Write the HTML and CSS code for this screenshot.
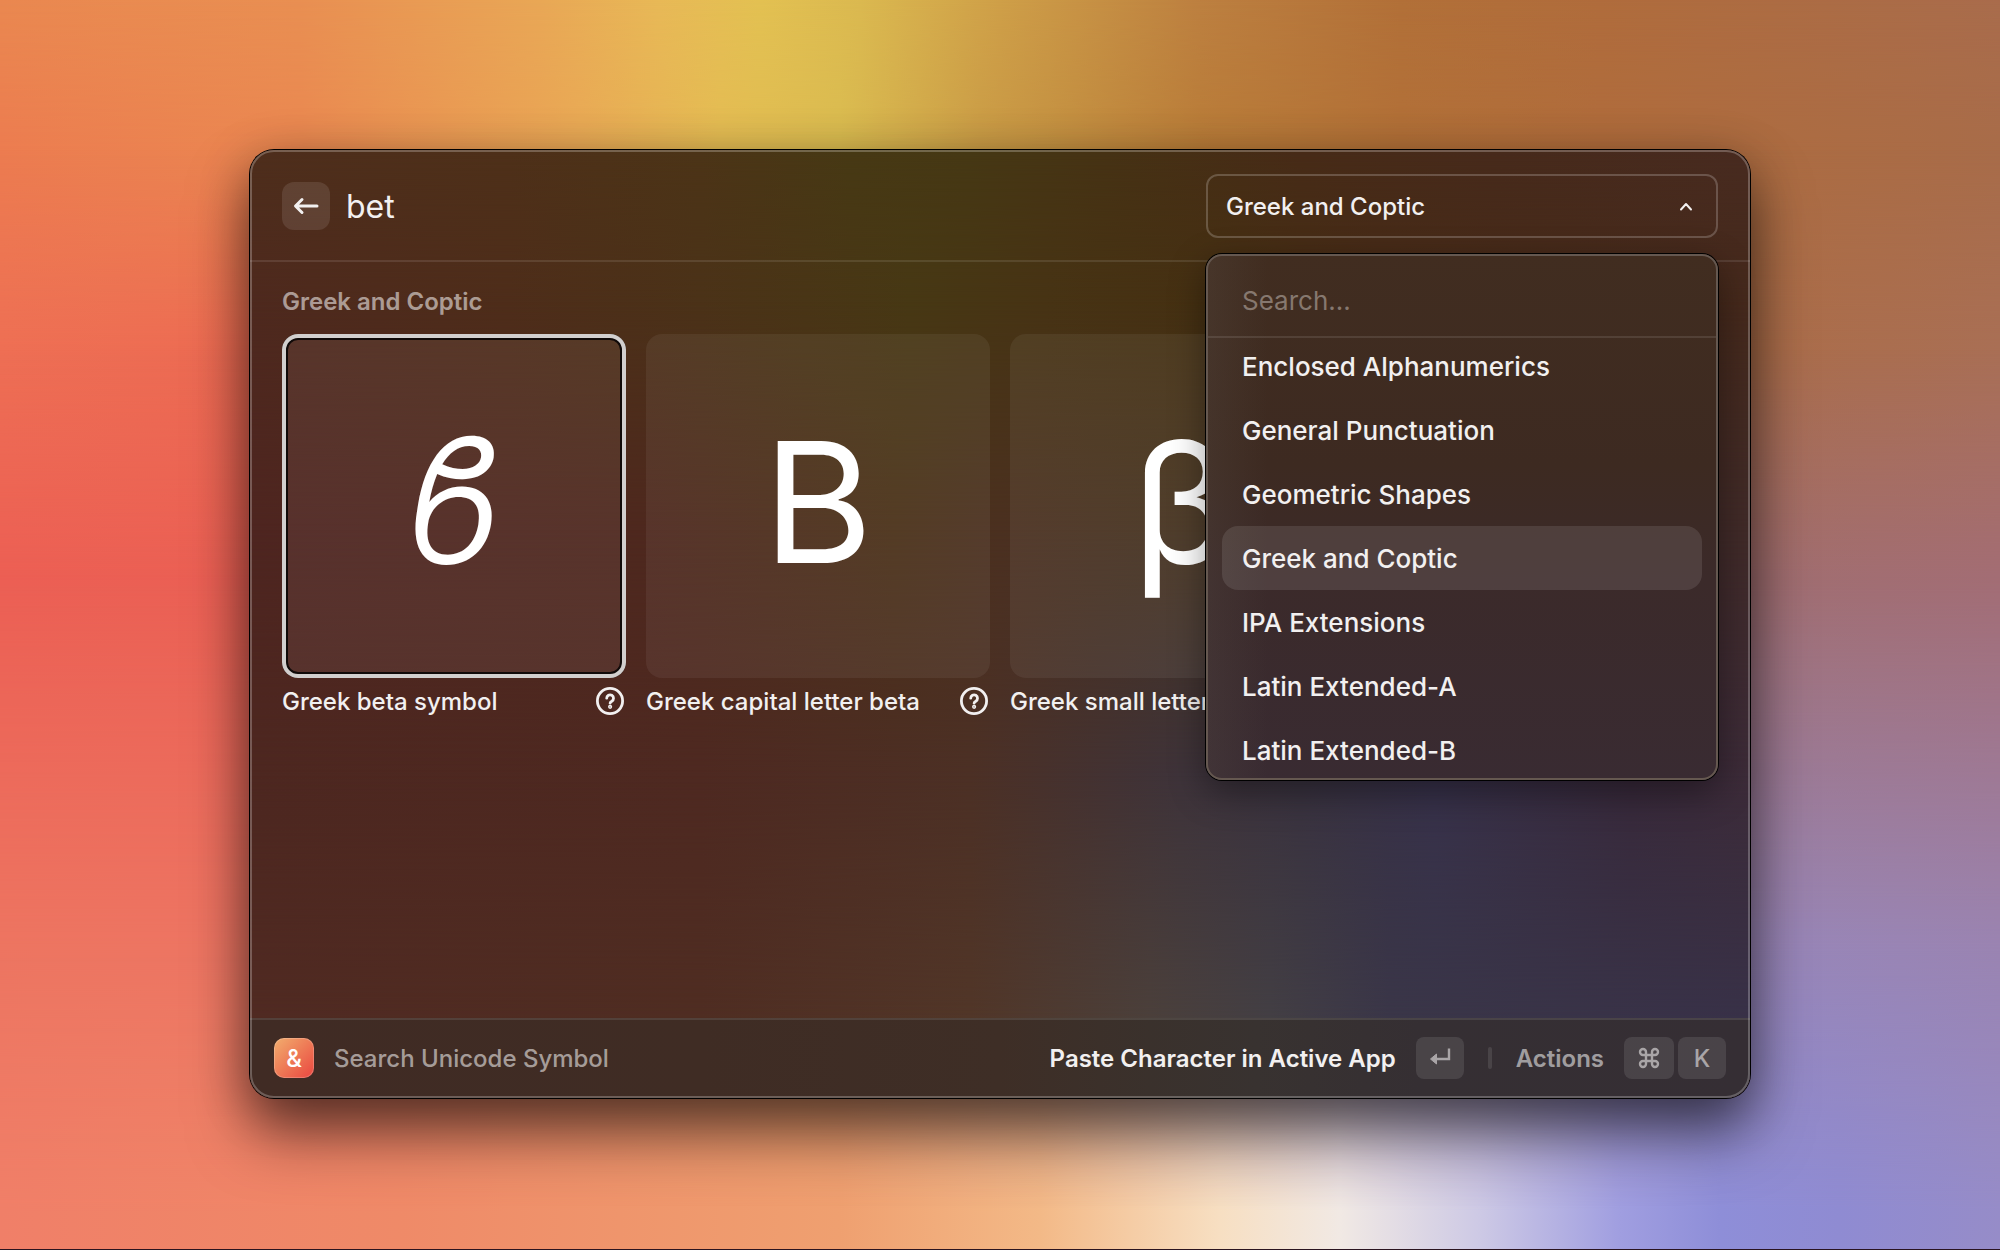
FILE: index.html
```html
<!DOCTYPE html>
<html lang="en">
<head>
<meta charset="utf-8">
<title>Search Unicode Symbol</title>
<link rel="stylesheet" href="styles.css">
</head>
<body>
<div class="mesh wallpaper" aria-hidden="true"><i class="w1"></i><i class="w2"></i><i class="w3"></i><i class="w4"></i><i class="w5"></i><i class="w6"></i></div>
<main class="window">
  <div class="mesh glass" aria-hidden="true"><i class="g1"></i><i class="g2"></i><i class="g3"></i><i class="g4"></i><i class="g5"></i></div>
  <header class="header">
    <button class="back" type="button" aria-label="Back">
      <svg width="28" height="28" viewBox="0 0 28 28" fill="none" stroke="currentColor" stroke-width="3" stroke-linecap="round" stroke-linejoin="round"><path d="M25 14H4M10 7.500 3.500 14l6.500 6.500"/></svg>
    </button>
    <input class="query" type="text" aria-label="Search symbols" value="bet">
    <div class="picker">
      <select class="picker-select" aria-label="Unicode block">
        <option>Enclosed Alphanumerics</option>
        <option>General Punctuation</option>
        <option>Geometric Shapes</option>
        <option selected>Greek and Coptic</option>
        <option>IPA Extensions</option>
        <option>Latin Extended-A</option>
        <option>Latin Extended-B</option>
      </select>
      <svg class="chevron" width="16" height="16" viewBox="0 0 16 16" fill="none" stroke="currentColor" stroke-width="2" stroke-linecap="round" stroke-linejoin="round"><path d="M3 11.500 8 6l5 5.500"/></svg>
      <div class="popup">
        <input class="popup-search" type="text" aria-label="Search blocks" placeholder="Search...">
        <div class="popup-list">
          <button class="item" type="button">Enclosed Alphanumerics</button>
          <button class="item" type="button">General Punctuation</button>
          <button class="item" type="button">Geometric Shapes</button>
          <button class="item selected" type="button">Greek and Coptic</button>
          <button class="item" type="button">IPA Extensions</button>
          <button class="item" type="button">Latin Extended-A</button>
          <button class="item" type="button">Latin Extended-B</button>
        </div>
      </div>
    </div>
  </header>
  <section class="content">
    <h2 class="section-title">Greek and Coptic</h2>
    <div class="grid">
      <article class="card">
        <div class="tile active">ϐ</div>
        <div class="caption"><span>Greek beta symbol</span>
          <svg class="help" viewBox="0 0 32 32" fill="none" stroke="currentColor" stroke-width="2.800" stroke-linecap="round" stroke-linejoin="round"><circle cx="16" cy="16" r="12.600"/><path d="M12.700 13.200a3.400 3.400 0 1 1 5.100 3c-1.200.7-1.700 1.100-1.700 2"/><circle cx="16.100" cy="21.800" r=".7" fill="currentColor"/></svg>
        </div>
      </article>
      <article class="card">
        <div class="tile">Β</div>
        <div class="caption"><span>Greek capital letter beta</span>
          <svg class="help" viewBox="0 0 32 32" fill="none" stroke="currentColor" stroke-width="2.800" stroke-linecap="round" stroke-linejoin="round"><circle cx="16" cy="16" r="12.600"/><path d="M12.700 13.200a3.400 3.400 0 1 1 5.100 3c-1.200.7-1.700 1.100-1.700 2"/><circle cx="16.100" cy="21.800" r=".7" fill="currentColor"/></svg>
        </div>
      </article>
      <article class="card">
        <div class="tile">β</div>
        <div class="caption"><span>Greek small letter beta</span></div>
      </article>
    </div>
  </section>
  <footer class="footer">
    <span class="app-icon">&amp;</span>
    <span class="app-name">Search Unicode Symbol</span>
    <button class="action primary" type="button">Paste Character in Active App
      <kbd class="key"><svg width="24" height="24" viewBox="0 0 24 24" fill="none" stroke="currentColor" stroke-width="2.400"><path d="M21 2.500V13H6"/><path d="M8.500 8 2.500 13l6 5z" fill="currentColor" stroke-width="1" stroke-linejoin="round"/></svg></kbd>
    </button>
    <span class="divider"></span>
    <button class="action" type="button">Actions
      <span class="keys">
        <kbd class="key command"><svg width="24" height="24" viewBox="0 0 24 24" fill="none" stroke="currentColor" stroke-width="2.400"><path d="M15 6v12a3 3 0 1 0 3-3H6a3 3 0 1 0 3 3V6a3 3 0 1 0-3 3h12a3 3 0 1 0-3-3"/></svg></kbd>
        <kbd class="key">K</kbd>
      </span>
    </button>
  </footer>
</main>
</body>
</html>
```
FILE: styles.css
```css
* { box-sizing: border-box; }

body {
  margin: 0;
  min-height: 100vh;
  padding: 150px 12.5vw 152px;
  display: flex;
  position: relative;
  font-family: Inter, "Noto Sans", sans-serif;
  font-size: 24px;
  font-weight: 500;
  color: #f2f0f0;
}

button, input, select {
  font: inherit;
  color: inherit;
  background: none;
  border: 0;
  padding: 0;
  margin: 0;
  outline: 0;
}

/* Colour meshes: each row fades in over the one above it */
.mesh { position: absolute; inset: 0; overflow: hidden; }
.mesh i {
  position: absolute;
  inset: 0;
  -webkit-mask-image: linear-gradient(transparent var(--from), #000 var(--to));
  mask-image: linear-gradient(transparent var(--from), #000 var(--to));
}
.mesh i:first-child { -webkit-mask-image: none; mask-image: none; }

.wallpaper { border-bottom: 1px solid #2a1420; }
.w1 { background: linear-gradient(90deg, #ea8850, #e98f52 15%, #e9a756 27%, #e8b957 33%, #e3c152 38%, #dbb950 43%, #cf9f48 50%, #bd8040 60%, #b27038 70%, #b06c3c 80%, #a96c4c); }
.w2 { --from: 0%; --to: 12%; background: linear-gradient(90deg, #ec7c50, #ea8851 15%, #e9a955 29%, #e4bc53 36%, #dabc50 42%, #ca9c46 49%, #b97c38 60%, #b27038 70%, #b06c3c 80%, #a86c49); }
.w3 { --from: 12%; --to: 28%; background: linear-gradient(90deg, #ee6f54, #ec6a52 15%, #c89048 40%, #ab6d4a 88%, #a96f55); }
.w4 { --from: 28%; --to: 46%; background: linear-gradient(90deg, #ec5f54, #ea6054 15%, #b07050 50%, #a16e70 88%, #a36d74); }
.w5 { --from: 46%; --to: 76%; background: linear-gradient(90deg, #ed7561, #ed7563 15%, #e09068 40%, #9a80b0 70%, #9886b8 90%, #9a84b2); }
.w6 { --from: 76%; --to: 97%; background: linear-gradient(90deg, #f07f68, #ef8a68 20%, #efa070 42%, #f3b987 52%, #f7dfc2 61%, #f1e9e4 67%, #cdc9e5 74%, #a09ee0 81%, #8e8ed8 86%, #8f8bd2 92%, #968cc8); }

.window {
  flex: 1;
  min-width: 0;
  position: relative;
  display: flex;
  flex-direction: column;
  border-radius: 24px;
  background: #4e2820;
  box-shadow: 0 0 0 1px #000, 0 36px 60px rgba(0, 0, 0, .5), 0 10px 50px rgba(0, 0, 0, .3);
}
.window::after {
  content: "";
  position: absolute;
  inset: 0;
  border: 2px solid rgba(255, 255, 255, .24);
  border-radius: 24px;
  pointer-events: none;
}

.glass { border-radius: 24px; }
.g1 { background: linear-gradient(90deg, #4e2e1c, #4e3019 17%, #4c3417 30%, #473914 40%, #463814 48%, #463214 57%, #472b17 70%, #472a1b 83%, #482b20); }
.g2 { --from: 0%; --to: 16%; background: linear-gradient(90deg, #4e291e, #4e2d1a 17%, #4b3218 30%, #473814 44%, #473314 53%, #453012 64%, #472b17 75%, #45291c); }
.g3 { --from: 16%; --to: 40%; background: linear-gradient(90deg, #4e2520, #4e281e 26%, #4a3018 43%, #4b3020 50%, #45321f 63%, #412a28 85%, #402a28); }
.g4 { --from: 40%; --to: 66%; background: linear-gradient(90deg, #4d2720, #4e2921 30%, #4c3025 48%, #3e333a 62%, #39323f 70%, #37314a 79%, #38293a 92%, #3c2b38); }
.g5 { --from: 66%; --to: 92%; background: linear-gradient(90deg, #502a22, #4f2d22 30%, #513628 48%, #4b403b 60%, #433f44 68%, #3a3648 76%, #383148); }

.header {
  position: relative;
  z-index: 1;
  height: 112px;
  padding: 2px 32px 0;
  display: flex;
  align-items: center;
  gap: 16px;
  border-bottom: 2px solid rgba(255, 255, 255, .1);
}
.back {
  width: 48px;
  height: 48px;
  display: grid;
  place-items: center;
  border-radius: 12px;
  background: rgba(255, 255, 255, .1);
}
.query { flex: 1; min-width: 0; font-size: 32px; font-weight: 400; }

.picker { position: relative; flex: 0 0 512px; }
.picker-select {
  display: block;
  appearance: none;
  width: 100%;
  height: 64px;
  padding: 0 18px;
  border: 2px solid rgba(255, 255, 255, .2);
  border-radius: 12px;
}
.picker-select option { color: #222; }
.chevron { position: absolute; right: 24px; top: 24px; pointer-events: none; }

.popup {
  position: absolute;
  top: 80px;
  left: 0;
  right: 0;
  height: 526px;
  display: flex;
  flex-direction: column;
  border-radius: 16px;
  border: 2px solid #655850;
  background: linear-gradient(90deg, rgba(90, 80, 72, .25), transparent 12%), linear-gradient(#412d20, #3d2a21 40%, #3b2a2a 62%, #392b32);
  background-origin: border-box;
  box-shadow: 0 0 0 1px #000, 0 12px 36px rgba(0, 0, 0, .4);
  overflow: hidden;
  font-size: 26px;
  font-weight: 500;
}
.popup-search {
  flex: 0 0 82px;
  padding: 8px 34px 0;
  font-weight: 400;
  border-bottom: 2px solid rgba(255, 255, 255, .1);
}
.popup-search::placeholder { color: #86786f; opacity: 1; }
.popup-list {
  flex: 1;
  min-height: 0;
  display: flex;
  flex-direction: column;
  justify-content: center;
  padding: 0 14px;
  overflow: hidden;
}
.item { flex: 0 0 64px; padding: 0 20px; text-align: left; border-radius: 16px; }
.item.selected { background: rgba(255, 255, 255, .1); }

.content { position: relative; flex: 1; padding: 24px 32px; }
.section-title {
  margin: 0 0 16px;
  font-size: 24px;
  line-height: 32px;
  font-weight: 600;
  color: rgba(255, 255, 255, .55);
}
.grid { display: grid; grid-template-columns: repeat(4, 1fr); gap: 20px; }
.card { min-width: 0; }
.tile {
  aspect-ratio: 1;
  padding-bottom: 8px;
  display: grid;
  place-items: center;
  border-radius: 16px;
  background: rgba(255, 255, 255, .06);
  font-size: 168px;
  line-height: 1;
  font-weight: 400;
  color: #fff;
}
.tile.active {
  box-shadow: inset 0 0 0 4px #d2cfce, inset 0 0 0 6px #100a09;
  font-style: italic;
  font-weight: 300;
}
.caption {
  display: flex;
  align-items: center;
  justify-content: space-between;
  height: 46px;
  white-space: nowrap;
}
.help { width: 32px; height: 32px; }

.footer {
  position: relative;
  height: 80px;
  padding: 0 24px 2px;
  display: flex;
  align-items: center;
  border-top: 2px solid rgba(255, 255, 255, .1);
  border-radius: 0 0 24px 24px;
  background: linear-gradient(90deg, #402b24, #3f2c24 30%, #3e2e26 50%, #3a312c 60%, #383230 67%, #352f33 78%, #352e34);
  background-origin: border-box;
}
.app-icon {
  width: 40px;
  height: 40px;
  margin-right: 20px;
  display: grid;
  place-items: center;
  border-radius: 10px;
  background: linear-gradient(135deg, #f2ae6e, #ee7a56 50%, #ea4640);
  box-shadow: inset 0 0 0 1px rgba(255, 255, 255, .2);
  color: #fff;
}
.app-name { flex: 1; color: rgba(255, 255, 255, .55); }
.action {
  display: flex;
  align-items: center;
  gap: 20px;
  font-weight: 600;
  color: rgba(255, 255, 255, .55);
}
.action.primary { color: #f2f0f0; }
.divider {
  width: 4px;
  height: 22px;
  margin: 0 24px;
  border-radius: 2px;
  background: rgba(255, 255, 255, .1);
}
.keys { display: flex; gap: 4px; }
.key {
  width: 48px;
  height: 42px;
  display: grid;
  place-items: center;
  border-radius: 8px;
  background: rgba(255, 255, 255, .1);
  font: 500 24px Inter, sans-serif;
  color: #a9a5a7;
}
.key.command { width: 50px; }
```
